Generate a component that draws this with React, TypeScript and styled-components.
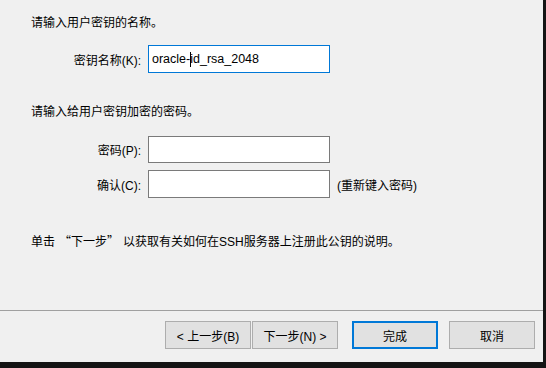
import React from "react";
import styled, { createGlobalStyle } from "styled-components";

const GlobalStyle = createGlobalStyle`
  html, body {
    margin: 0;
    padding: 0;
    background: #111;
  }
  body {
    font-family: "Liberation Sans", "Noto Sans CJK SC", sans-serif;
    font-size: 12px;
    color: #000;
  }
`;

const Frame = styled.div`
  width: 546px;
  height: 368px;
  background: #141414;
  display: flex;
  align-items: flex-start;
`;

const Window = styled.div`
  width: 543px;
  height: 362px;
  background: #f0f0f0;
  display: flex;
  flex-direction: column;
`;

const Content = styled.div`
  flex: 1;
  padding: 15px 0 0 31px;
  display: flex;
  flex-direction: column;
`;

const Heading = styled.div<{ $gap?: number }>`
  line-height: 16px;
  margin-top: ${(p) => p.$gap ?? 0}px;
  white-space: nowrap;
`;

// opening quote gets room before it, closing quote room after it
const Quote = styled.span<{ $open?: boolean }>`
  font-family: "Noto Sans CJK SC", sans-serif;
  margin: ${(p) => (p.$open ? "0 0 0 4px" : "0 4px 0 0")};
`;

const Row = styled.div<{ $gap: number }>`
  display: flex;
  align-items: center;
  margin-top: ${(p) => p.$gap}px;
`;

const Label = styled.div`
  width: 110px;
  margin-right: 7px;
  text-align: right;
  white-space: nowrap;
`;

const Field = styled.div<{ $focused?: boolean; $h?: number }>`
  box-sizing: border-box;
  width: 182px;
  height: ${(p) => p.$h ?? 28}px;
  background: #fff;
  border: 1px solid ${(p) => (p.$focused ? "#0078d7" : "#7a7a7a")};
  padding: 0 0 0 3px;
  display: flex;
  align-items: center;
  font-size: 12.5px;
  white-space: nowrap;
`;

const Caret = styled.span`
  display: inline-block;
  width: 1px;
  height: 15px;
  background: #000;
  margin: 0 -1px 0 0;
  vertical-align: middle;
`;

const Hint = styled.div`
  margin-left: 7px;
  white-space: nowrap;
`;

const Footer = styled.div`
  height: 52px;
  border-top: 1px solid #a0a0a0;
  display: flex;
  justify-content: flex-end;
  align-items: flex-start;
  padding: 10px 8px 0 0;
  box-sizing: border-box;
`;

const Button = styled.button<{ $primary?: boolean; $gapLeft?: number }>`
  box-sizing: border-box;
  width: 86px;
  height: 28px;
  margin-left: ${(p) => p.$gapLeft ?? 0}px;
  background: #e1e1e1;
  border: ${(p) => (p.$primary ? "2px solid #0078d7" : "1px solid #adadad")};
  font-family: "Liberation Sans", "Noto Sans CJK SC", sans-serif;
  font-size: 12px;
  color: #000;
  padding: 0;
  white-space: nowrap;
`;

export default function App() {
  return (
    <>
      <GlobalStyle />
      <Frame>
        <Window>
          <Content>
            <Heading>请输入用户密钥的名称。</Heading>
            <Row $gap={14}>
              <Label>密钥名称(K):</Label>
              <Field $focused>
                oracle-<Caret />id_rsa_2048
              </Field>
            </Row>
            <Heading $gap={31}>请输入给用户密钥加密的密码。</Heading>
            <Row $gap={16}>
              <Label>密码(P):</Label>
              <Field $h={27} />
            </Row>
            <Row $gap={7}>
              <Label>确认(C):</Label>
              <Field />
              <Hint>(重新键入密码)</Hint>
            </Row>
            <Heading $gap={35}>
              单击<Quote $open>“</Quote>下一步<Quote>”</Quote>以获取有关如何在SSH服务器上注册此公钥的说明。
            </Heading>
          </Content>
          <Footer>
            <Button>&lt; 上一步(B)</Button>
            <Button $gapLeft={1}>下一步(N) &gt;</Button>
            <Button $primary $gapLeft={14}>
              完成
            </Button>
            <Button $gapLeft={11}>取消</Button>
          </Footer>
        </Window>
      </Frame>
    </>
  );
}
